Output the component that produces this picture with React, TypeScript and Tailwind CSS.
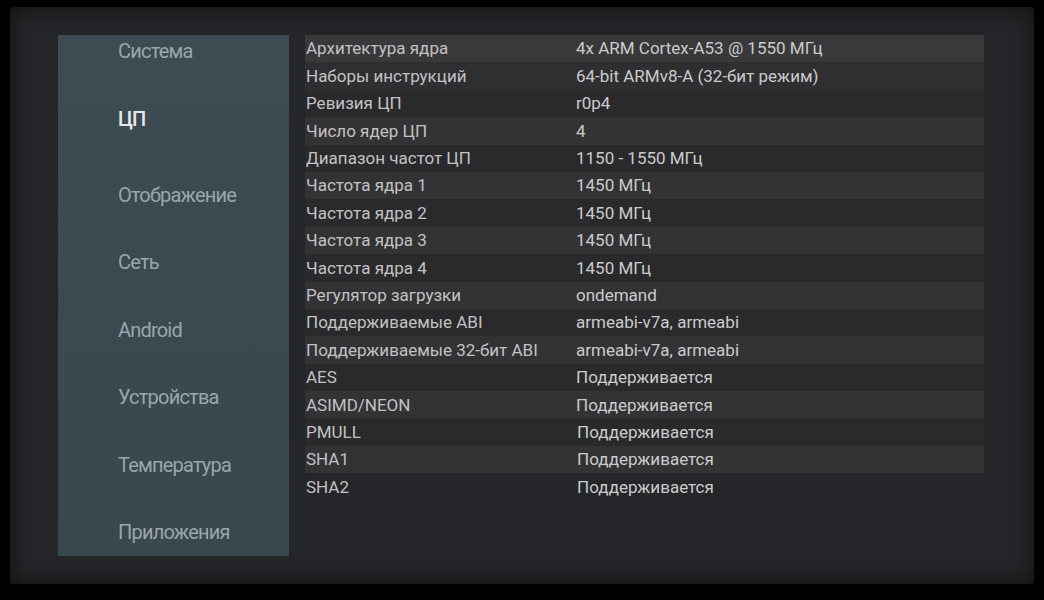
import React from 'react';

const menu = [
  'Система',
  'ЦП',
  'Отображение',
  'Сеть',
  'Android',
  'Устройства',
  'Температура',
  'Приложения',
];

const rows: [string, string][] = [
  ['Архитектура ядра', '4x ARM Cortex-A53 @ 1550 МГц'],
  ['Наборы инструкций', '64-bit ARMv8-A (32-бит режим)'],
  ['Ревизия ЦП', 'r0p4'],
  ['Число ядер ЦП', '4'],
  ['Диапазон частот ЦП', '1150 - 1550 МГц'],
  ['Частота ядра 1', '1450 МГц'],
  ['Частота ядра 2', '1450 МГц'],
  ['Частота ядра 3', '1450 МГц'],
  ['Частота ядра 4', '1450 МГц'],
  ['Регулятор загрузки', 'ondemand'],
  ['Поддерживаемые ABI', 'armeabi-v7a, armeabi'],
  ['Поддерживаемые 32-бит ABI', 'armeabi-v7a, armeabi'],
  ['AES', 'Поддерживается'],
  ['ASIMD/NEON', 'Поддерживается'],
  ['PMULL', 'Поддерживается'],
  ['SHA1', 'Поддерживается'],
  ['SHA2', 'Поддерживается'],
];

const rowBg = (i: number) => {
  if (i === 0) return 'bg-[#39393c]';
  if (i === 1) return 'bg-[#2f2f32]';
  if (i === rows.length - 1) return 'bg-transparent';
  return i % 2 === 1 ? 'bg-[#333336]' : 'bg-[#2a2a2d]';
};

const Sidebar = () => (
  <div className="w-[231px] h-[521px] shrink-0 bg-gradient-to-b from-[#3d4c53] to-[#39474e] pt-[4px] overflow-hidden">
    {menu.map((item) => {
      const active = item === 'ЦП';
      return (
        <div
          key={item}
          className={`pl-[60px] text-[20px] leading-[24px] tracking-[-0.8px] ${
            active ? 'h-[76px] text-[#e6e8e9] font-medium' : 'h-[67.5px] text-[#9aa6ab]'
          }`}
        >
          {item}
        </div>
      );
    })}
  </div>
);

const InfoTable = () => (
  <div className="w-[679px] flex flex-col">
    {rows.map(([label, value], i) => (
      <div key={label} className={`h-[27.4px] flex items-center text-[17px] pt-[1px] ${rowBg(i)}`}>
        <div className="w-[271px] pl-[1px] text-[#c2c2c2]">{label}</div>
        <div className={`text-[#cbcbcb] ${i >= 14 ? 'pl-[1px]' : ''}`}>{value}</div>
      </div>
    ))}
  </div>
);

export default function App() {
  return (
    <div
      className="w-[1044px] h-[600px] bg-black pt-[7px] pl-[10px] overflow-hidden"
      style={{ fontFamily: 'Roboto, "Noto Sans", sans-serif' }}
    >
      <div className="w-[1024px] h-[577px] rounded-[4px] bg-[#252629] shadow-[inset_0_0_24px_rgba(0,0,0,0.6)] flex gap-[16px] pt-[28px] pl-[48px]">
        <Sidebar />
        <InfoTable />
      </div>
    </div>
  );
}
